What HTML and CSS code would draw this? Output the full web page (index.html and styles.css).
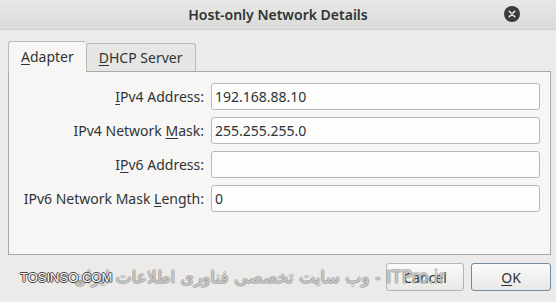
FILE: index.html
```html
<!DOCTYPE html>
<html lang="en">
<head>
    <meta charset="UTF-8">
    <title>Host-only Network Details</title>
    <link rel="stylesheet" href="styles.css">
</head>
<body>
    <div class="dialog">
        <div class="titlebar">
            <span class="title">Host-only Network Details</span>
            <button class="close-btn" aria-label="Close">
                <svg width="16" height="16" viewBox="0 0 16 16">
                    <circle cx="8" cy="8" r="8" fill="#3a3d3e"/>
                    <path d="M5.3 5.3 L10.7 10.7 M10.7 5.3 L5.3 10.7" stroke="#e6e6e6" stroke-width="1.6" stroke-linecap="round"/>
                </svg>
            </button>
        </div>

        <div class="content">
            <div class="tabs">
                <div class="tab active"><u>A</u>dapter</div>
                <div class="tab"><u>D</u>HCP Server</div>
            </div>

            <div class="panel">
                <div class="form-grid">
                    <label class="field-label"><u>I</u>Pv4 Address:</label>
                    <input class="field-input" type="text" value="192.168.88.10">

                    <label class="field-label">IPv4 Network <u>M</u>ask:</label>
                    <input class="field-input" type="text" value="255.255.255.0">

                    <label class="field-label">I<u>P</u>v6 Address:</label>
                    <input class="field-input" type="text" value="">

                    <label class="field-label">IPv6 Network Mask <u>L</u>ength:</label>
                    <input class="field-input" type="text" value="0">
                </div>
            </div>

            <div class="actions">
                <button class="btn">Cancel</button>
                <button class="btn btn-default"><u>O</u>K</button>
            </div>
        </div>

        <!-- watermark over the dialog -->
        <div class="watermark-site">TOSINSO.COM</div>
        <div class="watermark-fa" dir="rtl">ITPro.ir - وب سایت تخصصی فناوری اطلاعات ایران</div>
    </div>
</body>
</html>
```

FILE: styles.css
```css
body {
    margin: 0;
    padding: 0;
    font-family: 'Noto Sans', 'DejaVu Sans', sans-serif;
    color: #2e3436;
    background: #ecebe9;
}

.dialog {
    position: relative;
    width: 556px;
    height: 302px;
    background: #ecebe9;
    overflow: hidden;
}

.titlebar {
    height: 29px;
    display: flex;
    align-items: center;
    justify-content: center;
    position: relative;
    background: linear-gradient(#e8e8e7, #dadad8);
    border-bottom: 1px solid #cfcfcd;
}

.title {
    font-size: 14px;
    font-weight: 600;
    color: #2e3436;
}

.close-btn {
    position: absolute;
    right: 36px;
    top: 6px;
    width: 16px;
    height: 16px;
    padding: 0;
    border: none;
    background: none;
    display: flex;
}

.content {
    padding: 11px 5px 0 8px;
}

.tabs {
    display: flex;
    align-items: flex-end;
    height: 30px;
    position: relative;
    z-index: 1;
}

.tab {
    font-size: 14px;
    box-sizing: border-box;
    height: 28px;
    padding: 0 12px 0 12px;
    display: flex;
    align-items: center;
    border: 1px solid #b9b9b6;
    border-bottom: none;
    border-radius: 3px 3px 0 0;
    background: #e6e6e4;
    color: #2e3436;
}

.tab.active {
    height: 31px;
    margin-bottom: -1px;
    background: #f7f6f4;
    padding-bottom: 2px;
    border-right: none;
}

.tab u,
.field-label u,
.btn u {
    text-underline-offset: 2px;
}

.panel {
    box-sizing: border-box;
    width: 543px;
    height: 184px;
    background: #f7f6f4;
    border: 1px solid #a9a9a6;
    padding: 11px 10px 0 0;
}

.form-grid {
    display: grid;
    grid-template-columns: 195px 1fr;
    column-gap: 7px;
    row-gap: 7px;
    align-items: center;
}

.field-label {
    font-size: 14px;
    text-align: right;
    color: #2e3436;
}

.field-input {
    box-sizing: border-box;
    height: 27px;
    width: 100%;
    font-family: 'Noto Sans', 'DejaVu Sans', sans-serif;
    font-size: 14px;
    color: #2e3436;
    background: #fdfdfc;
    border: 1px solid #b8b8b5;
    border-radius: 3px;
    padding: 0 3px;
    outline: none;
}

.actions {
    display: flex;
    justify-content: flex-end;
    gap: 7px;
    margin-top: 8px;
}

.btn {
    box-sizing: border-box;
    height: 28px;
    width: 78px;
    font-family: 'Noto Sans', 'DejaVu Sans', sans-serif;
    font-size: 14px;
    color: #2e3436;
    background: linear-gradient(#fbfbfa, #e8e8e6);
    border: 1px solid #b4b4b1;
    border-radius: 3px;
    padding: 0;
}

.btn-default {
    width: 80px;
    border-color: #6f8ba6;
}

.watermark-site {
    position: absolute;
    left: 20px;
    top: 270px;
    font-family: 'Liberation Sans', sans-serif;
    font-size: 13px;
    color: #ffffff;
    text-shadow: 1px 0 0 #444, -1px 0 0 #444, 0 1px 0 #444, 0 -1px 0 #444;
    z-index: 2;
}

.watermark-fa {
    position: absolute;
    left: 74px;
    top: 267px;
    font-family: 'DejaVu Sans', sans-serif;
    font-size: 17px;
    color: rgba(255, 255, 255, 0.55);
    text-shadow: 1px 0 0 rgba(110, 110, 110, 0.45), -1px 0 0 rgba(110, 110, 110, 0.45), 0 1px 0 rgba(110, 110, 110, 0.45), 0 -1px 0 rgba(110, 110, 110, 0.45);
    white-space: nowrap;
}
```
